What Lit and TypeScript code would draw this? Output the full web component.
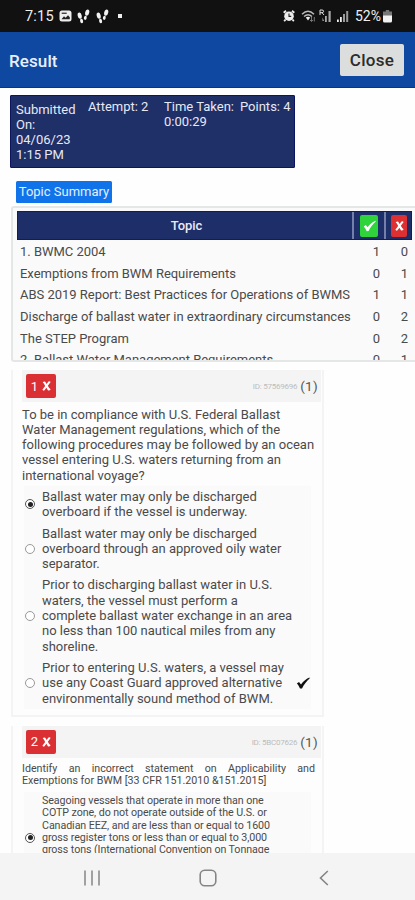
import { LitElement, html, css, svg } from "lit";
import { customElement } from "lit/decorators.js";
import { classMap } from "lit/directives/class-map.js";

interface Option { lines: string[]; picked?: boolean; correct?: boolean; }
interface Question { n: number; id: string; prompt: string[]; options: Option[]; compact?: boolean; }

const topics: [string, number, number][] = [
  ["1. BWMC 2004", 1, 0],
  ["Exemptions from BWM Requirements", 0, 1],
  ["ABS 2019 Report: Best Practices for Operations of BWMS", 1, 1],
  ["Discharge of ballast water in extraordinary circumstances", 0, 2],
  ["The STEP Program", 0, 2],
  ["2. Ballast Water Management Requirements", 0, 1],
];

const questions: Question[] = [
  {
    n: 1,
    id: "ID: 57569696",
    prompt: [
      "To be in compliance with U.S. Federal Ballast",
      "Water Management regulations, which of the",
      "following procedures may be followed by an ocean",
      "vessel entering U.S. waters returning from an",
      "international voyage?",
    ],
    options: [
      { picked: true, lines: ["Ballast water may only be discharged", "overboard if the vessel is underway."] },
      { lines: ["Ballast water may only be discharged", "overboard through an approved oily water", "separator."] },
      { lines: ["Prior to discharging ballast water in U.S.", "waters, the vessel must perform a", "complete ballast water exchange in an area", "no less than 100 nautical miles from any", "shoreline."] },
      { correct: true, lines: ["Prior to entering U.S. waters, a vessel may", "use any Coast Guard approved alternative", "environmentally sound method of BWM."] },
    ],
  },
  {
    n: 2,
    id: "ID: 5BC07626",
    compact: true,
    prompt: ["Identify an incorrect statement on Applicability and", "Exemptions for BWM [33 CFR 151.2010 &151.2015]"],
    options: [
      { picked: true, lines: ["Seagoing vessels that operate in more than one", "COTP zone, do not operate outside of the U.S. or", "Canadian EEZ, and are less than or equal to 1600", "gross register tons or less than or equal to 3,000", "gross tons (International Convention on Tonnage"] },
    ],
  },
];

const check = (w: number, h: number) => html`<svg width=${w} height=${h} viewBox="0 0 14 12"><path d="M.8 6.6 3 5 5 7.4C7.2 4.4 9.8 1.9 13.4.4L13.8 1.2C10.6 4 8 7.4 6 11.4L4 11.6C3.2 9.8 2.2 8 .8 6.6Z" fill="currentColor"/></svg>`;
const cross = (w: number, h: number) => html`<svg width=${w} height=${h} viewBox="0 0 10 11"><path d="M.8 1.2Q2.4-.2 3.6.8L5.1 3.2 7.2.6Q8.600-.2 9.600 1L6.500 5.300Q7.600 7.800 9.600 9.200 8.200 11.200 6.600 10.200L4.800 7.500 2.800 10.300Q1.400 11.200.4 9.800L3.500 5.500Q2.400 2.600.8 1.200Z" fill="currentColor"/></svg>`;
const steps = () => html`<svg width="13" height="15" viewBox="0 0 13 15" fill="#f2f2f2"><ellipse cx="2.7" cy="6.6" rx="2" ry="3.2" transform="rotate(-12 2.7 6.6)"/><ellipse cx="4.6" cy="12" rx="1.5" ry="2.2" transform="rotate(-12 4.6 12)"/><ellipse cx="10.2" cy="3.6" rx="2" ry="3.2" transform="rotate(14 10.2 3.6)"/><ellipse cx="8.3" cy="8.8" rx="1.4" ry="2.1" transform="rotate(14 8.3 8.8)"/></svg>`;
const bars = () => svg`<path d="M0 9.5h1.8V12H0zM3 7h1.8v5H3z" fill="#eee"/><path d="M6 4h2v8H6zM9.2 1h2v11h-2z" fill="#999"/>`;

@customElement("app-root")
export class AppRoot extends LitElement {
  static styles = css`
    :host { display: block; width: 415px; height: 900px; overflow: hidden; background: #fefefe; color: #4a4a4a; font-family: Roboto, sans-serif; }
    * { box-sizing: border-box; }
    .screen { display: flex; flex-direction: column; height: 900px; }
    svg { display: block; flex: none; }
    .status { height: 32px; flex: none; background: #111; color: #eee; display: flex; align-items: center; padding: 0 23px 0 25px; font-size: 14.5px; letter-spacing: .2px; }
    .time { width: 34px; }
    .left, .right { display: flex; align-items: center; }
    .left { gap: 5.4px; }
    .right { margin-left: auto; }
    .wifi { margin-left: 6px; }
    .roam { margin-left: 3px; }
    .signal { margin-left: 5px; }
    .dot { width: 4px; height: 4px; background: #eee; margin-left: 4px; }
    .pct { font-size: 14px; letter-spacing: 0; margin: 0 2px 0 6px; }
    .bar { height: 56px; flex: none; background: #0f48a0; border-bottom: 1.5px solid #06329c; display: flex; align-items: center; justify-content: space-between; padding: 2px 11px 0 9px; }
    .title { color: #e9effa; font-size: 17px; font-weight: 500; letter-spacing: .1px; }
    .close { font: 500 17px/32px Roboto, sans-serif; letter-spacing: .3px; color: #2c2c2c; background: #dcdddd; border: 0; border-radius: 2px; width: 64px; height: 32px; padding: 0; margin-bottom: 1px; }
    .body { flex: 1; min-height: 0; overflow: hidden; padding-left: 10px; display: flex; flex-direction: column; align-items: flex-start; }
    .info { flex: none; margin-top: 7px; width: 285px; height: 73px; background: #1f2f68; border: 1.5px solid #0d1460; border-radius: 1px; color: #e6e9f3; font-size: 13px; line-height: 15.2px; display: grid; grid-template-columns: 72px 76px 76px 1fr; padding: 2.5px 0 0 5px; white-space: nowrap; }
    .when { padding-top: 3px; }
    .summary { flex: none; margin: 13px 0 0 6px; width: 96px; height: 22px; background: #1173ea; border-radius: 1.5px; color: #e3effd; font-size: 13px; line-height: 21px; text-align: center; letter-spacing: 0; white-space: nowrap; }
    .topics { flex: none; margin: 3px 0 0 1px; width: 410px; height: 156px; overflow: hidden; border: 2px solid #e5e7e7; border-radius: 3px; background: #fafafa; padding: 3px 0 0 4px; }
    .row { display: grid; grid-template-columns: 336px 31px 28px; height: 21.7px; align-items: center; font-size: 13px; letter-spacing: -.02px; white-space: nowrap; }
    .row > :first-child { padding-left: 3px; }
    .num { text-align: right; padding-right: 4px; }
    .head { height: 29px; width: 395px; background: #1e2e68; border: 1px solid #111c5e; color: #e8ebf5; font-weight: 500; align-items: stretch; grid-template-columns: 336px 32px 26px; margin-bottom: .5px; }
    .head > div { display: flex; align-items: center; justify-content: center; border-right: 2px solid #7480aa; }
    .head > div:last-child { border-right: 0; }
    .tick, .wrong { display: flex; align-items: center; justify-content: center; color: #fff; border-radius: 2px; height: 22px; width: 18px; }
    .tick { background: #2fd43c; }
    .wrong { background: #dc3032; width: 16px; }
    .card { flex: none; position: relative; width: 313px; margin-left: 1px; border: 2px solid #f4f4f4; border-top: 0; padding: 0 0 6px 9px; margin-top: 8px; background: #fdfdfd; }
    .card + .card { margin-top: 9px; }
    .qhead { height: 32px; width: 299px; background: #f4f4f4; display: flex; align-items: center; padding: 0 3px 0 4px; }
    .badge { width: 30px; height: 24px; background: #db3033; border-radius: 2px; color: #fff; display: flex; align-items: center; justify-content: center; gap: 4px; font-size: 13px; }
    .qid { margin-left: auto; font-size: 8px; letter-spacing: -.25px; color: #bcbcbc; padding-top: 1px; }
    .pts { font-size: 13.5px; letter-spacing: .3px; margin-left: 3px; color: #555; }
    .prompt { font-size: 13px; line-height: 15.3px; padding-top: 4.5px; white-space: nowrap; margin-bottom: 3px; width: 293px; }
    .opt { display: flex; align-items: center; width: 287px; margin: 0 0 0 2px; background: #fafafa; padding: 3px 0; font-size: 13px; line-height: 15.3px; white-space: nowrap; }
    .radio { flex: none; width: 10px; height: 10px; border: 1px solid #999; border-radius: 50%; margin: 0 7px 0 1px; display: flex; align-items: center; justify-content: center; background: #fff; }
    .on { border-color: #555; }
    .on::after { content: ""; width: 5px; height: 5px; border-radius: 50%; background: #222; }
    .mark { margin-left: auto; margin-right: 1px; color: #111; }
    .compact .prompt { font-size: 10.7px; line-height: 12.4px; padding-top: 5.2px; margin-bottom: 4px; }
    .compact .prompt div:first-child { text-align: justify; text-align-last: justify; }
    .compact .opt { font-size: 10.7px; line-height: 12.4px; letter-spacing: -.08px; padding-bottom: 16px; }
    .compact .radio { margin-top: 24px; }
    .nav { height: 47px; flex: none; background: #f4f4f4; display: flex; align-items: center; padding: 2px 86px 0 84px; }
    .home { margin: 0 auto 0 99px; }
  `;

  private option(o: Option) {
    return html`<div class="opt">
      <span class=${classMap({ radio: true, on: !!o.picked })}></span>
      <div>${o.lines.map((l) => html`<div>${l}</div>`)}</div>
      ${o.correct ? html`<span class="mark">${check(14, 12)}</span>` : null}
    </div>`;
  }

  private question(q: Question) {
    return html`<section class=${classMap({ card: true, compact: !!q.compact })}>
      <div class="qhead">
        <div class="badge"><span>${q.n}</span>${cross(9, 10)}</div>
        <span class="qid">${q.id}</span><span class="pts">(1)</span>
      </div>
      <div class="prompt">${q.prompt.map((l) => html`<div>${l}</div>`)}</div>
      ${q.options.map((o) => this.option(o))}
    </section>`;
  }

  render() {
    return html`<div class="screen">
      <div class="status">
        <span class="time">7:15</span>
        <div class="left">
          <svg width="13" height="12" viewBox="0 0 13 12"><rect x=".5" y=".5" width="12" height="11" rx="2.5" fill="#eee"/><path d="M2.5 9.2 5 6.3l1.6 1.5L9 5.2l1.8 2v2z" fill="#222"/><path d="M2.7 2.6h5v1.3h-5z" fill="#333"/></svg>
          ${steps()}${steps()}
          <span class="dot"></span>
        </div>
        <div class="right">
          <svg width="12" height="12" viewBox="0 0 12 12"><path d="M.7 2.8 3 .8M11.3 2.8 9 .8M2.5 9.5 1.2 11.3M9.5 9.5l1.3 1.8" stroke="#eee" stroke-width="1.8"/><circle cx="6" cy="6.2" r="4.8" fill="#eee"/><path d="M6 3.4v3h2.2" fill="none" stroke="#222" stroke-width="1.1"/></svg>
          <svg class="wifi" width="15" height="12" viewBox="0 0 15 12"><path d="M1 4.3Q7-1.6 13 4.3M3 6.6Q7 2.8 11 6.6" fill="none" stroke="#bbb" stroke-width="1.4"/><path d="M4.8 7.6Q7 5.8 9.2 7.6L7 10.4Z" fill="#eee"/><path d="M10.5 7v4.5M9 10l1.5 1.5L12 10M13.3 11.5V7" stroke="#777" fill="none"/></svg>
          <svg class="roam" width="13" height="14" viewBox="0 0 13 14"><path d="M1 6V1h2q1.6 0 1.6 1.3T3 3.7H1M3 3.7 5 6" fill="none" stroke="#ddd"/><path d="M3.5 8.5 5 12H3.5zM6 7h1.8v6H6zM9.5 2h2.2v11H9.5z" fill="#aaa"/></svg>
          <svg class="signal" width="12" height="13" viewBox="0 0 12 13">${bars()}</svg>
          <span class="pct">52%</span>
          <svg width="9" height="13" viewBox="0 0 9 13"><path d="M2.8 0h3.4v1.5H9V6H0V1.5h2.8z" fill="#777"/><path d="M0 5.5h9V11q0 1.5-1.5 1.5h-6Q0 12.5 0 11z" fill="#f2f2f2"/></svg>
        </div>
      </div>
      <header class="bar"><span class="title">Result</span><button class="close">Close</button></header>
      <main class="body">
        <div class="info">
          <div class="when">Submitted<br>On:<br>04/06/23<br>1:15 PM</div>
          <div>Attempt: 2</div>
          <div>Time Taken:<br>0:00:29</div>
          <div>Points: 4</div>
        </div>
        <div class="summary">Topic Summary</div>
        <div class="topics">
          <div class="row head"><div>Topic</div><div><span class="tick">${check(13, 12)}</span></div><div><span class="wrong">${cross(9, 10)}</span></div></div>
          ${topics.map(([t, a, b]) => html`<div class="row"><span>${t}</span><span class="num">${a}</span><span class="num">${b}</span></div>`)}
        </div>
        ${questions.map((q) => this.question(q))}
      </main>
      <nav class="nav">
        <svg width="16" height="16" viewBox="0 0 16 16"><path d="M1 .5v15M8 .5v15M15 .5v15" stroke="#858585" stroke-width="1.5"/></svg>
        <svg class="home" width="18" height="18" viewBox="0 0 18 18"><rect x="1.2" y="1.2" width="15.6" height="15.6" rx="4.5" fill="none" stroke="#858585" stroke-width="1.6"/></svg>
        <svg width="10" height="16" viewBox="0 0 10 16"><path d="M8.8 1 1.5 8l7.3 7" fill="none" stroke="#858585" stroke-width="1.6"/></svg>
      </nav>
    </div>`;
  }
}
